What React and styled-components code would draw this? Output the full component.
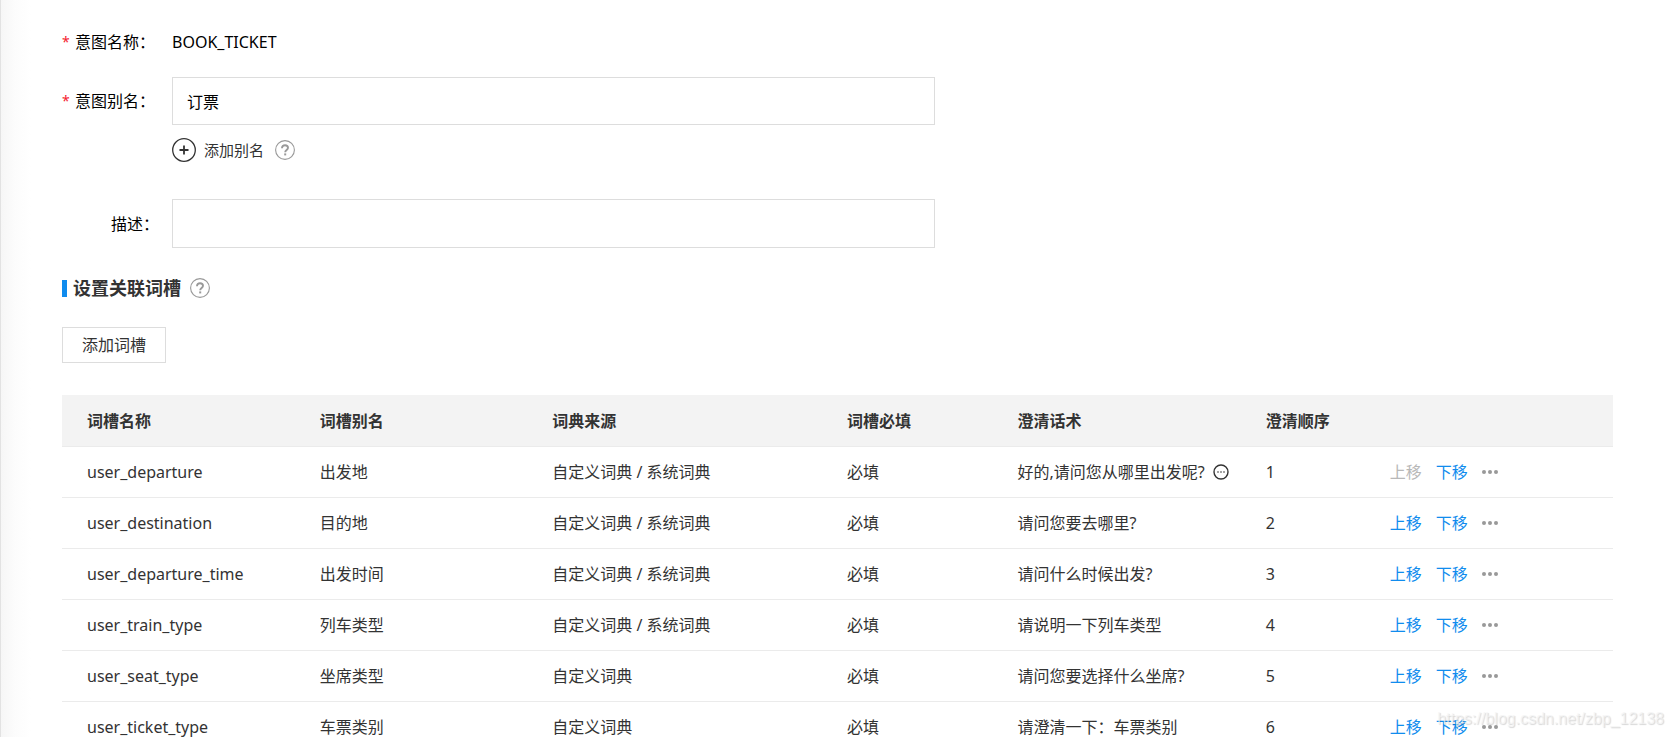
import React, { useState } from 'react';
import styled, { createGlobalStyle } from 'styled-components';

const GlobalStyle = createGlobalStyle`
  * {
    box-sizing: border-box;
  }
  body {
    margin: 0;
    background: #fff;
    color: #333;
    font-family: "Noto Sans", "Noto Sans CJK SC", sans-serif;
    font-size: 16px;
    line-height: 24px;
  }
  button, input {
    font: inherit;
    color: inherit;
  }
`;

const Page = styled.main`
  position: relative;
  height: 100vh;
  overflow: hidden;
  padding: 30px 60px 0 61px;
  border-left: 1px solid #e2e2e2;
  background: linear-gradient(to right, #f6f6f6, #fcfcfc 14px, #fff 30px);
`;

const FormRow = styled.div`
  display: flex;
  align-items: center;
  margin-bottom: ${(props) => props.$gap || 0}px;
`;

const labelStyle = `
  display: flex;
  flex: none;
  width: 110px;
  padding-right: 13px;
  color: #000;
`;

const Label = styled.label`
  ${labelStyle}
  justify-content: ${(props) => (props.$required ? 'flex-start' : 'flex-end')};
`;

const Caption = styled.span`
  ${labelStyle}
`;

const Star = styled.span`
  width: 13px;
  color: #f5222d;
  font-size: 14px;
`;

const Value = styled.span`
  color: #000;
`;

const TextInput = styled.input`
  width: 100%;
  max-width: 763px;
  height: ${(props) => (props.$tall ? '49px' : '48px')};
  padding: 0 14px;
  border: 1px solid #ddd;
  background: #fff;
  color: #000;
  outline: none;
`;

const AliasBar = styled.div`
  display: flex;
  align-items: center;
  gap: 11px;
  margin: 0 0 37px 110px;
`;

const PlainButton = styled.button`
  display: inline-flex;
  align-items: center;
  gap: 8px;
  padding: 0;
  border: 0;
  background: none;
  font-size: ${(props) => (props.$small ? '15px' : '16px')};
  cursor: pointer;
`;

const Heading = styled.div`
  display: flex;
  align-items: center;
  height: 24px;
  margin-bottom: 27px;
`;

const Bar = styled.span`
  width: 5px;
  height: 17px;
  margin-right: 6px;
  background: #108cee;
`;

const Title = styled.h2`
  margin: 0 9px 0 0;
  font-size: 18px;
  font-weight: bold;
`;

const AddButton = styled.button`
  height: 36px;
  padding: 0 19px;
  margin-bottom: 32px;
  border: 1px solid #ddd;
  background: #fff;
  cursor: pointer;
`;

const Table = styled.table`
  width: 100%;
  table-layout: fixed;
  border-collapse: separate;
  border-spacing: 0;
`;

const Th = styled.th`
  width: ${(props) => props.$width};
  height: 52px;
  padding: 0 0 0 25px;
  border-bottom: 1px solid #ebebeb;
  background: #f3f3f3;
  font-weight: bold;
  text-align: left;
`;

const Td = styled.td`
  height: 51px;
  padding: 0 0 0 25px;
  border-bottom: 1px solid #ebebeb;
  white-space: nowrap;
`;

const Inline = styled.div`
  display: flex;
  align-items: center;
  gap: ${(props) => props.$gap}px;
`;

const Move = styled(PlainButton)`
  color: #108cee;
  &:disabled {
    color: #b8b8b8;
    cursor: default;
  }
`;

const Watermark = styled.div`
  position: absolute;
  right: 9px;
  bottom: 6px;
  color: rgba(244, 244, 244, 0.7);
  text-shadow: 1px 1px 1px rgba(0, 0, 0, 0.16);
  font-family: "Liberation Sans", sans-serif;
  font-size: 16px;
  pointer-events: none;
`;

const columns = [
  { title: '词槽名称', width: '15%' },
  { title: '词槽别名', width: '15%' },
  { title: '词典来源', width: '19%' },
  { title: '词槽必填', width: '11%' },
  { title: '澄清话术', width: '16%' },
  { title: '澄清顺序', width: '8%' },
  { title: '', width: '16%' },
];

const slots = [
  { name: 'user_departure', alias: '出发地', source: '自定义词典 / 系统词典', ask: '好的,请问您从哪里出发呢?', more: true },
  { name: 'user_destination', alias: '目的地', source: '自定义词典 / 系统词典', ask: '请问您要去哪里?' },
  { name: 'user_departure_time', alias: '出发时间', source: '自定义词典 / 系统词典', ask: '请问什么时候出发?' },
  { name: 'user_train_type', alias: '列车类型', source: '自定义词典 / 系统词典', ask: '请说明一下列车类型' },
  { name: 'user_seat_type', alias: '坐席类型', source: '自定义词典', ask: '请问您要选择什么坐席?' },
  { name: 'user_ticket_type', alias: '车票类别', source: '自定义词典', ask: '请澄清一下：车票类别' },
];

const PlusIcon = () => (
  <svg width="24" height="24" viewBox="0 0 24 24" fill="none" stroke="#333">
    <circle cx="12" cy="12" r="11.3" strokeWidth="1.3" />
    <path d="M12 7.5v9M7.5 12h9" strokeWidth="1.8" />
  </svg>
);

const HelpIcon = () => (
  <svg width="20" height="20" viewBox="0 0 20 20" fill="none" stroke="#999">
    <circle cx="10" cy="10" r="9.4" strokeWidth="1.1" />
    <path d="M7 8.2c0-1.9 1.2-3 3-3s3 1.1 3 2.6c0 2.1-2.8 2.3-2.8 4.5" strokeWidth="1.9" />
    <path d="M10.2 13.4v2" strokeWidth="2" />
  </svg>
);

const TalkIcon = () => (
  <svg width="16" height="16" viewBox="0 0 16 16">
    <circle cx="8" cy="8" r="7" fill="none" stroke="#333" strokeWidth="1.4" />
    <circle cx="5" cy="8" r="0.8" fill="#333" />
    <circle cx="8" cy="8" r="0.8" fill="#333" />
    <circle cx="11" cy="8" r="0.8" fill="#333" />
  </svg>
);

const DotsIcon = () => (
  <svg width="16" height="16" viewBox="0 0 16 16" fill="#999">
    <circle cx="2" cy="8" r="2" />
    <circle cx="8" cy="8" r="2" />
    <circle cx="14" cy="8" r="2" />
  </svg>
);

export default function App() {
  const [alias, setAlias] = useState('订票');
  const [description, setDescription] = useState('');

  return (
    <>
      <GlobalStyle />
      <Page>
        <FormRow $gap={23}>
          <Caption>
            <Star>*</Star>
            意图名称：
          </Caption>
          <Value>BOOK_TICKET</Value>
        </FormRow>
        <FormRow $gap={13}>
          <Label htmlFor="alias" $required>
            <Star>*</Star>
            意图别名：
          </Label>
          <TextInput id="alias" value={alias} onChange={(e) => setAlias(e.target.value)} />
        </FormRow>
        <AliasBar>
          <PlainButton type="button" $small>
            <PlusIcon />
            添加别名
          </PlainButton>
          <HelpIcon />
        </AliasBar>
        <FormRow $gap={28}>
          <Label htmlFor="description">描述：</Label>
          <TextInput
            id="description"
            $tall
            value={description}
            onChange={(e) => setDescription(e.target.value)}
          />
        </FormRow>
        <Heading>
          <Bar />
          <Title>设置关联词槽</Title>
          <HelpIcon />
        </Heading>
        <AddButton type="button">添加词槽</AddButton>
        <Table>
          <thead>
            <tr>
              {columns.map((column) => (
                <Th key={column.title} $width={column.width}>{column.title}</Th>
              ))}
            </tr>
          </thead>
          <tbody>
            {slots.map((slot, index) => (
              <tr key={slot.name}>
                <Td>{slot.name}</Td>
                <Td>{slot.alias}</Td>
                <Td>{slot.source}</Td>
                <Td>必填</Td>
                <Td>
                  <Inline $gap={8}>
                    {slot.ask}
                    {slot.more && <TalkIcon />}
                  </Inline>
                </Td>
                <Td>{index + 1}</Td>
                <Td>
                  <Inline $gap={14}>
                    <Move type="button" disabled={index === 0}>上移</Move>
                    <Move type="button">下移</Move>
                    <PlainButton type="button" aria-label="更多">
                      <DotsIcon />
                    </PlainButton>
                  </Inline>
                </Td>
              </tr>
            ))}
          </tbody>
        </Table>
        <Watermark>https://blog.csdn.net/zbp_12138</Watermark>
      </Page>
    </>
  );
}
